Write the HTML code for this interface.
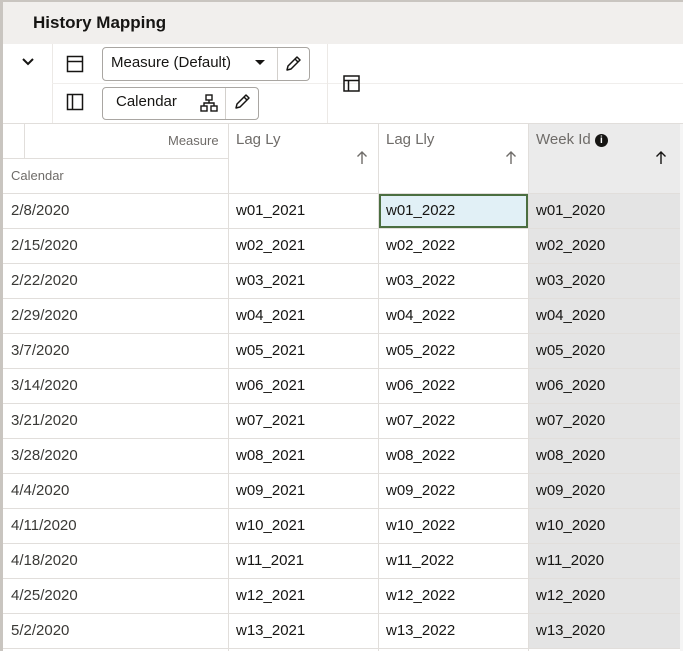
<!DOCTYPE html>
<html><head><style>
*{box-sizing:border-box;margin:0;padding:0}
body{width:683px;height:651px;overflow:hidden;background:#fff;font-family:"Liberation Sans",sans-serif;color:#161513;position:relative}
.a{position:absolute}
.t{font-size:15px}
</style></head><body>
<div class="a" style="left:0;top:0;width:683px;height:2px;background:#c9c5c0"></div>
<div class="a" style="left:0;top:0;width:3px;height:651px;background:#c9c5c0"></div>
<div class="a" style="left:3px;top:2px;width:680px;height:42px;background:#f1efed"></div>
<div class="a" style="left:33px;top:13px;font-size:17px;font-weight:bold;color:#161513">History Mapping</div>
<!-- toolbar -->
<svg class="a" style="left:20px;top:56px" width="16" height="12"><path d="M3 3l5 5 5-5" stroke="#161513" stroke-width="2" fill="none"/></svg>
<div class="a" style="left:52px;top:44px;width:1px;height:79px;background:#ece9e6"></div>
<div class="a" style="left:52px;top:83px;width:631px;height:1px;background:#f0eeec"></div>
<div class="a" style="left:327px;top:44px;width:1px;height:79px;background:#ece9e6"></div>
<svg class="a" style="left:66px;top:55px" width="18" height="18"><rect x="1.5" y="1.5" width="15" height="15" fill="none" stroke="#161513" stroke-width="1.5"/><path d="M1.5 6.5h15" stroke="#161513" stroke-width="1.5"/></svg>
<svg class="a" style="left:66px;top:93px" width="18" height="18"><rect x="1.5" y="1.5" width="15" height="15" fill="none" stroke="#161513" stroke-width="1.5"/><path d="M6.5 1.5v15" stroke="#161513" stroke-width="1.5"/></svg>
<div class="a" style="left:102px;top:47px;width:208px;height:34px;border:1px solid #a9a6a2;border-radius:4px;background:#fff"></div>
<div class="a" style="left:277px;top:48px;width:1px;height:32px;background:#d3d0cc"></div>
<div class="a t" style="left:111px;top:54px">Measure (Default)</div>
<svg class="a" style="left:254px;top:59px" width="12" height="8"><path d="M1 1h10L6 6z" fill="#161513"/></svg>
<svg class="a" style="left:284px;top:55px" width="18" height="18"><path d="M3 15l1-4 9-9 3 3-9 9z M11 4l3 3" stroke="#161513" stroke-width="1.5" fill="none" stroke-linejoin="round"/></svg>
<div class="a" style="left:102px;top:87px;width:157px;height:33px;border:1px solid #a9a6a2;border-radius:4px;background:#fff"></div>
<div class="a" style="left:225px;top:88px;width:1px;height:31px;background:#d3d0cc"></div>
<div class="a t" style="left:116px;top:93px">Calendar</div>
<svg class="a" style="left:200px;top:94px" width="18" height="18"><rect x="6" y="1" width="6" height="5" fill="none" stroke="#161513" stroke-width="1.4"/><rect x="1" y="12" width="6" height="5" fill="none" stroke="#161513" stroke-width="1.4"/><rect x="11" y="12" width="6" height="5" fill="none" stroke="#161513" stroke-width="1.4"/><path d="M9 6v3M4 12V9h10v3" stroke="#161513" stroke-width="1.4" fill="none"/></svg>
<svg class="a" style="left:233px;top:93px" width="18" height="18"><path d="M3 15l1-4 9-9 3 3-9 9z M11 4l3 3" stroke="#161513" stroke-width="1.5" fill="none" stroke-linejoin="round"/></svg>
<svg class="a" style="left:343px;top:75px" width="17" height="17"><rect x="1" y="1" width="15" height="15" fill="none" stroke="#161513" stroke-width="1.5"/><path d="M1 5.5h15M5.5 5.5v10.5" stroke="#161513" stroke-width="1.5"/></svg>
<!-- grid -->
<div id="g"></div>
<script>
var h='';
var gl='#e1dedb';
h+='<div class="a" style="left:3px;top:123px;width:680px;height:1px;background:'+gl+'"></div>';
h+='<div class="a" style="left:528px;top:124px;width:152px;height:524px;background:#e4e4e4"></div>';
h+='<div class="a" style="left:528px;top:124px;width:152px;height:69px;background:#ebebeb"></div>';
h+='<div class="a" style="left:680px;top:124px;width:3px;height:527px;background:#f5f5f5"></div>';
h+='<div class="a" style="left:24px;top:124px;width:1px;height:34px;background:'+gl+'"></div>';
h+='<div class="a" style="left:3px;top:158px;width:225px;height:1px;background:'+gl+'"></div>';
h+='<div class="a" style="left:168px;top:133px;font-size:13px;color:#6f6c69">Measure</div>';
h+='<div class="a" style="left:11px;top:168px;font-size:13px;color:#6f6c69">Calendar</div>';
[228,378,528].forEach(function(x){h+='<div class="a" style="left:'+x+'px;top:124px;width:1px;height:527px;background:'+gl+'"></div>';});
var hd=[['Lag Ly',236,356],['Lag Lly',386,505],['Week Id',536,655]];
hd.forEach(function(c,i){h+='<div class="a t" style="left:'+c[1]+'px;top:131px;color:#6f6c69">'+c[0]+(i==2?' <span style="display:inline-block;width:13px;height:13px;border-radius:50%;background:#161513;color:#fff;font-size:10px;font-weight:bold;text-align:center;line-height:13px;vertical-align:1px">i</span>':'')+'</div>';
h+='<svg class="a" style="left:'+c[2]+'px;top:150px" width="12" height="15"><path d="M6 14V2M1.5 6.5L6 2l4.5 4.5" stroke="'+(i==2?'#161513':'#6f6c69')+'" stroke-width="1.4" fill="none"/></svg>';});
var d=['2/8/2020','2/15/2020','2/22/2020','2/29/2020','3/7/2020','3/14/2020','3/21/2020','3/28/2020','4/4/2020','4/11/2020','4/18/2020','4/25/2020','5/2/2020'];
for(var i=0;i<13;i++){var y=193+i*35;var n=('0'+(i+1)).slice(-2);
h+='<div class="a" style="left:3px;top:'+y+'px;width:677px;height:1px;background:'+gl+'"></div>';
h+='<div class="a t" style="left:11px;top:'+(y+9)+'px;color:#3a3936">'+d[i]+'</div>';
h+='<div class="a t" style="left:236px;top:'+(y+9)+'px">w'+n+'_2021</div>';
h+='<div class="a t" style="left:386px;top:'+(y+9)+'px">w'+n+'_2022</div>';
h+='<div class="a t" style="left:536px;top:'+(y+9)+'px">w'+n+'_2020</div>';}
h+='<div class="a" style="left:3px;top:648px;width:677px;height:1px;background:'+gl+'"></div>';
h+='<div class="a" style="left:379px;top:194px;width:149px;height:34px;background:#e1f0f6;border:2px solid #4b6e40"></div>';
h+='<div class="a t" style="left:386px;top:202px">w01_2022</div>';
document.getElementById('g').innerHTML=h;
</script>
</body></html>
